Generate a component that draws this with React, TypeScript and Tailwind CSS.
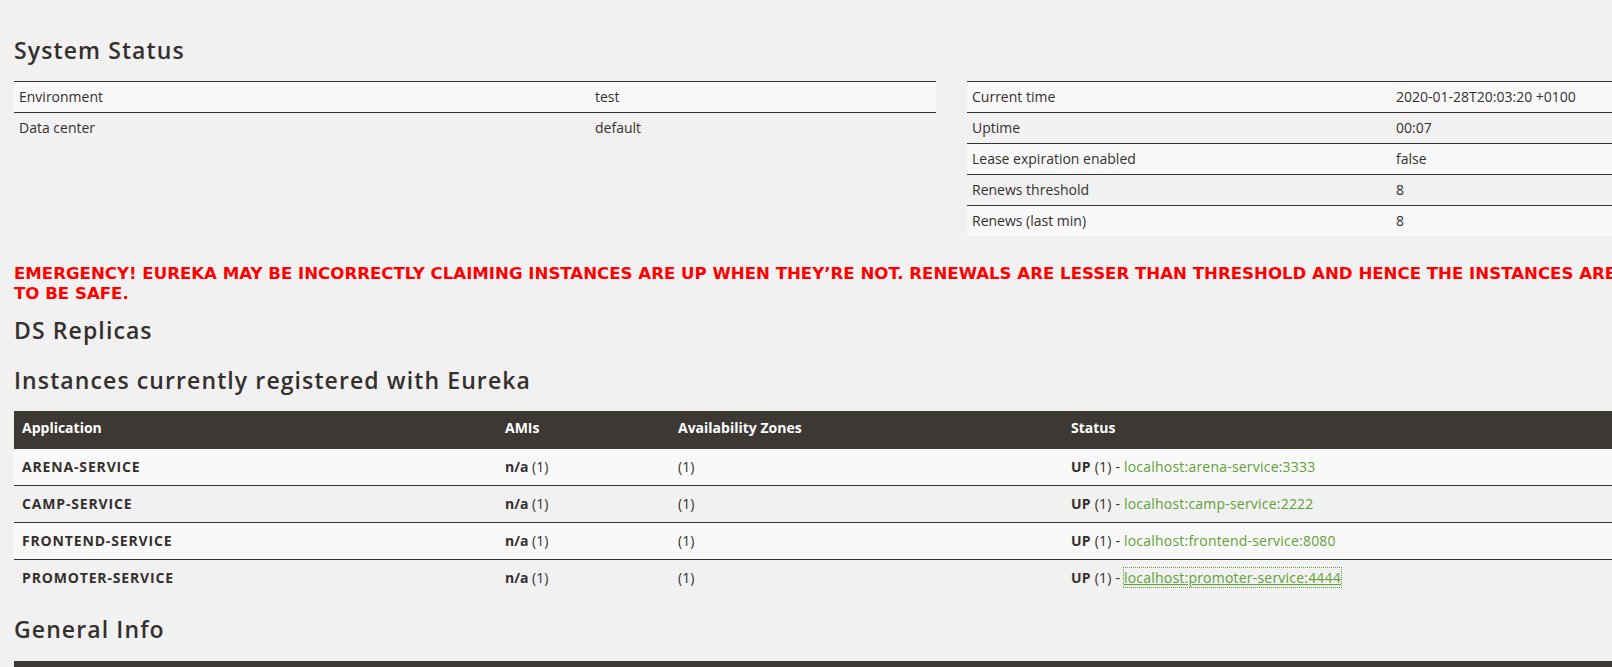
const envRows = [
  { label: 'Environment', value: 'test' },
  { label: 'Data center', value: 'default' },
];

const timeRows = [
  { label: 'Current time', value: '2020-01-28T20:03:20 +0100' },
  { label: 'Uptime', value: '00:07' },
  { label: 'Lease expiration enabled', value: 'false' },
  { label: 'Renews threshold', value: '8' },
  { label: 'Renews (last min)', value: '8' },
];

const instances = [
  { name: 'ARENA-SERVICE', link: 'localhost:arena-service:3333', focused: false },
  { name: 'CAMP-SERVICE', link: 'localhost:camp-service:2222', focused: false },
  { name: 'FRONTEND-SERVICE', link: 'localhost:frontend-service:8080', focused: false },
  { name: 'PROMOTER-SERVICE', link: 'localhost:promoter-service:4444', focused: true },
];

const StatusTable = ({
  rows,
  labelWidth,
}: {
  rows: { label: string; value: string }[];
  labelWidth: string;
}) => (
  <div className="w-[922px]">
    {rows.map((row, i) => (
      <div
        key={row.label}
        className={`flex border-t border-[#333] ${i % 2 === 0 ? 'bg-[#f9f9f9]' : ''}`}
      >
        <div className={`${labelWidth} shrink-0 p-[5px]`}>{row.label}</div>
        <div className="p-[5px]">{row.value}</div>
      </div>
    ))}
  </div>
);

export default function App() {
  return (
    <div className="h-[667px] w-full overflow-hidden bg-[#f1f1f1] font-['Open_Sans',sans-serif] text-[14px] leading-5 text-[#34302d]">
      <div className="ml-[14px] w-[1875px]">
        {/* System status */}
        <h2 className="pt-[37px] text-[23px] leading-[26px] font-semibold tracking-[0.048em]">System Status</h2>
        <div className="mt-[18px] flex gap-[31px]">
          <StatusTable rows={envRows} labelWidth="w-[576px]" />
          <StatusTable rows={timeRows} labelWidth="w-[424px]" />
        </div>

        {/* Emergency warning, runs past the right edge like the page does */}
        <h4 className="mt-[28px] font-['DejaVu_Sans',sans-serif] text-[16.6px] leading-5 font-bold whitespace-nowrap text-[#ff0000]">
          EMERGENCY! EUREKA MAY BE INCORRECTLY CLAIMING INSTANCES ARE UP WHEN THEY’RE NOT. RENEWALS ARE LESSER
          THAN THRESHOLD AND HENCE THE INSTANCES ARE NOT BEING EXPIRED JUST
          <br />
          TO BE SAFE.
        </h4>

        <h2 className="mt-[13px] text-[23px] leading-[26px] font-semibold tracking-[0.048em]">DS Replicas</h2>
        <h2 className="mt-[24px] text-[23px] leading-[26px] font-semibold tracking-[0.048em]">
          Instances currently registered with Eureka
        </h2>

        {/* Instances table */}
        <div className="mt-[18px]">
          <div className="grid h-[37px] grid-cols-[483px_173px_393px_1fr] bg-[#3c3834] pt-[7px] font-bold text-white">
            <div className="px-2">Application</div>
            <div className="px-2">AMIs</div>
            <div className="px-2">Availability Zones</div>
            <div className="px-2">Status</div>
          </div>
          {instances.map((inst, i) => (
            <div
              key={inst.name}
              className={`grid grid-cols-[483px_173px_393px_1fr] ${
                i === 0 ? 'border-t border-[#3c3834]' : 'border-t border-[#333]'
              } ${i % 2 === 0 ? 'bg-[#f9f9f9]' : ''}`}
            >
              <div className="p-2 font-bold tracking-[0.06em]">{inst.name}</div>
              <div className="p-2">
                <b>n/a</b> (1)
              </div>
              <div className="p-2">(1)</div>
              <div className="p-2 tracking-[0.015em]">
                <b>UP</b> (1) -{' '}
                <a
                  href="#"
                  className={`text-[#5fa134] ${
                    inst.focused ? 'underline outline-1 outline-dotted outline-[#5fa134]' : ''
                  }`}
                >
                  {inst.link}
                </a>
              </div>
            </div>
          ))}
        </div>

        <h2 className="mt-[20px] text-[23px] leading-[26px] font-semibold tracking-[0.048em]">General Info</h2>
        <div className="mt-[19px] h-[37px] bg-[#3c3834]" />
      </div>
    </div>
  );
}
